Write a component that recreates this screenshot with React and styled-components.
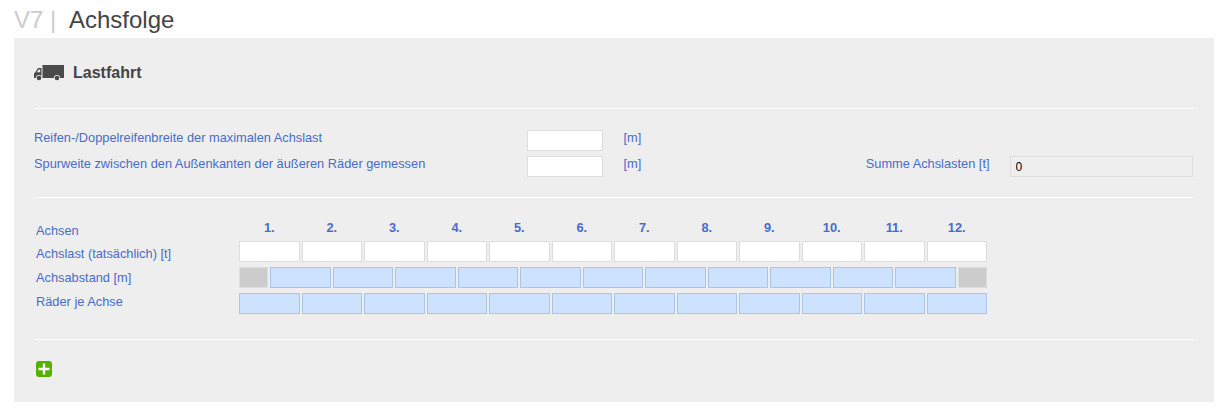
import React from 'react';
import styled, {createGlobalStyle} from 'styled-components';

const GlobalStyle = createGlobalStyle`
  html, body {
    margin: 0;
    padding: 0;
    background: #fff;
    font-family: "Liberation Sans", Arial, sans-serif;
  }
`;

const Page = styled.div`
  width: 1227px;
  height: 413px;
  overflow: hidden;
  padding: 0 13px 0 14px;
  box-sizing: border-box;
`;

const Heading = styled.h1`
  display: flex;
  height: 38px;
  margin: 0;
  font-size: 24px;
  font-weight: 400;
  line-height: 40px;
  color: #444;
  white-space: nowrap;
`;

const Version = styled.span`
  color: #ccc;
  width: 55px;
`;

const Panel = styled.section`
  background: #eee;
  height: 364px;
  padding: 0 20px;
  box-sizing: border-box;
`;

const CardTitle = styled.div`
  display: flex;
  align-items: center;
  gap: 9px;
  height: 70px;
  font-size: 16px;
  font-weight: 700;
  color: #444;
`;

const Rule = styled.hr`
  height: 1px;
  margin: 0;
  border: 0;
  background: #fff;
`;

const Fields = styled.div`
  display: grid;
  grid-template-rows: 21px 21px;
  row-gap: 5px;
  height: 88px;
  padding-top: 21px;
  box-sizing: border-box;
`;

const FieldRow = styled.div`
  display: flex;
  font-size: 12.8px;
  line-height: 16px;
  color: #4a6cc8;
`;

const FieldLabel = styled.label`
  width: 493px;
`;

const Unit = styled.span`
  width: 226px;
  margin-left: 20.5px;
`;

const SumLabel = styled.span`
  width: 160px;
  padding-right: 20px;
  box-sizing: border-box;
  text-align: right;
  white-space: nowrap;
`;

const Input = styled.input`
  display: block;
  box-sizing: border-box;
  width: ${p => p.$width || '100%'};
  height: 21px;
  margin: 0;
  padding: 1px 5px 0;
  min-width: 0;
  border: 1px solid ${p => (p.$tone === 'blue' ? '#a9c6e8' : '#ddd')};
  background: ${p =>
    p.$tone === 'blue' ? '#cce2ff' : p.$tone === 'grey' ? '#ccc' : '#fff'};
  font: 12px "Liberation Sans", Arial, sans-serif;
  color: #000;
`;

const SumInput = styled(Input)`
  background: #eee;
  width: 183px;
`;

const Axles = styled.div`
  height: 141px;
  padding: 22px 0 0 2px;
  box-sizing: border-box;
`;

const AxleRow = styled.div`
  display: flex;
  align-items: flex-start;
  height: ${p => p.$height || '26px'};
`;

const RowLabel = styled.div`
  width: 203px;
  flex: none;
  padding-top: ${p => p.$top};
  font-size: 12.8px;
  line-height: 16px;
  color: #4a6cc8;
`;

const Cells = styled.div`
  display: grid;
  width: 748px;
  column-gap: 2px;
  grid-template-columns: ${p =>
    p.$offset ? '29.25px repeat(11, 1fr) 29.25px' : 'repeat(12, 1fr)'};
`;

const AxleNumber = styled.div`
  text-align: center;
  font-size: 12.8px;
  font-weight: 700;
  line-height: 16px;
  color: #4a6cc8;
`;

const Footer = styled.div`
  padding-top: 21px;
`;

const AddButton = styled.button`
  display: block;
  width: 16px;
  height: 16px;
  margin: 0 0 0 2px;
  padding: 0;
  border: 0;
  border-radius: 3px;
  background: #55b000;
`;

const Truck = () => (
  <svg width="30" height="16" viewBox="0 0 30 16" aria-hidden="true">
    <rect x="8.5" y="0" width="21.5" height="13" fill="#4a4a4a" />
    <path d="M7.5 3H4L1.5 7 0 8.5V13h7.5z" fill="#4a4a4a" />
    <path d="M6.2 4.4H4.6L2.8 7.2h3.4z" fill="#eee" />
    <circle cx="5" cy="13" r="3.1" fill="#eee" />
    <circle cx="5" cy="13" r="2.3" fill="#4a4a4a" />
    <circle cx="23" cy="13" r="3.1" fill="#eee" />
    <circle cx="23" cy="13" r="2.3" fill="#4a4a4a" />
  </svg>
);

const Plus = () => (
  <svg width="16" height="16" viewBox="0 0 16 16" aria-hidden="true">
    <path d="M8 2.5v11M2.5 8h11" stroke="#fff" strokeWidth="2.4" fill="none" />
  </svg>
);

const axles = Array.from({length: 12}, (_, i) => i + 1);

export default function App() {
  return (
    <Page>
      <GlobalStyle />
      <Heading>
        <Version>V7 |</Version>
        Achsfolge
      </Heading>
      <Panel>
        <CardTitle>
          <Truck />
          Lastfahrt
        </CardTitle>
        <Rule />
        <Fields>
          <FieldRow>
            <FieldLabel>Reifen-/Doppelreifenbreite der maximalen Achslast</FieldLabel>
            <Input $width="76px" />
            <Unit>[m]</Unit>
          </FieldRow>
          <FieldRow>
            <FieldLabel>Spurweite zwischen den Außenkanten der äußeren Räder gemessen</FieldLabel>
            <Input $width="76px" />
            <Unit>[m]</Unit>
            <SumLabel>Summe Achslasten [t]</SumLabel>
            <SumInput defaultValue="0" readOnly />
          </FieldRow>
        </Fields>
        <Rule />
        <Axles>
          <AxleRow $height="21px">
            <RowLabel $top="3px">Achsen</RowLabel>
            <Cells>
              {axles.map(n => (
                <AxleNumber key={n}>{n}.</AxleNumber>
              ))}
            </Cells>
          </AxleRow>
          <AxleRow>
            <RowLabel $top="5px">Achslast (tatsächlich) [t]</RowLabel>
            <Cells>
              {axles.map(n => (
                <Input key={n} />
              ))}
            </Cells>
          </AxleRow>
          <AxleRow>
            <RowLabel $top="3px">Achsabstand [m]</RowLabel>
            <Cells $offset>
              <Input $tone="grey" />
              {axles.slice(1).map(n => (
                <Input key={n} $tone="blue" />
              ))}
              <Input $tone="grey" />
            </Cells>
          </AxleRow>
          <AxleRow>
            <RowLabel $top="1px">Räder je Achse</RowLabel>
            <Cells>
              {axles.map(n => (
                <Input key={n} $tone="blue" />
              ))}
            </Cells>
          </AxleRow>
        </Axles>
        <Rule />
        <Footer>
          <AddButton aria-label="Achse hinzufügen">
            <Plus />
          </AddButton>
        </Footer>
      </Panel>
    </Page>
  );
}
